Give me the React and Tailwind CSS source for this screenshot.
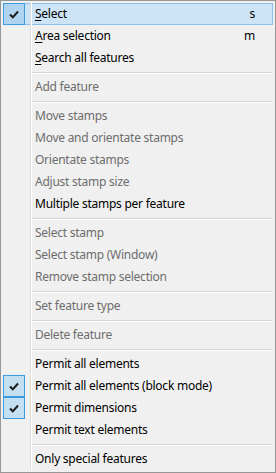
const groups = [
  [
    { label: "Select", mnemonic: true, shortcut: "s", checked: true, active: true },
    { label: "Area selection", mnemonic: true, shortcut: "m" },
    { label: "Search all features", mnemonic: true },
  ],
  [{ label: "Add feature", disabled: true }],
  [
    { label: "Move stamps", disabled: true },
    { label: "Move and orientate stamps", disabled: true },
    { label: "Orientate stamps", disabled: true },
    { label: "Adjust stamp size", disabled: true },
    { label: "Multiple stamps per feature" },
  ],
  [
    { label: "Select stamp", disabled: true },
    { label: "Select stamp (Window)", disabled: true },
    { label: "Remove stamp selection", disabled: true },
  ],
  [{ label: "Set feature type", disabled: true }],
  [{ label: "Delete feature", disabled: true }],
  [
    { label: "Permit all elements" },
    { label: "Permit all elements (block mode)", checked: true },
    { label: "Permit dimensions", checked: true },
    { label: "Permit text elements" },
  ],
  [{ label: "Only special features" }],
];

const Check = () => (
  <svg width="10" height="9" viewBox="0 0 10 9">
    <path d="M1 4.5 L3.8 7.3 L9 1.5" fill="none" stroke="#1a1a1a" strokeWidth="2" />
  </svg>
);

const MenuItem = ({ item }) => (
  <div
    className={`relative flex h-[22px] items-center border ${
      item.active ? "border-[#90c0ea] bg-[#cde4f7]" : "border-transparent"
    }`}
  >
    <div className="flex h-[22px] w-[27px] shrink-0 items-center -ml-px">
      {item.checked && (
        <div
          className={`flex h-[22px] w-[22px] items-center justify-center border border-[#3c9ade] ${
            item.active ? "bg-[#b0d4ef]" : "bg-[#c4dff1]"
          }`}
        >
          <Check />
        </div>
      )}
    </div>
    <div className="h-[22px] w-px shrink-0 bg-[#dcdcdc]" />
    <div className="h-[22px] w-px shrink-0 bg-white" />
    <div
      className={`flex flex-1 items-center justify-between pl-[3px] pr-[17px] text-[12px] tracking-[-0.25px] ${
        item.disabled ? "text-[#6d6d6d]" : "text-black"
      }`}
    >
      <span>
        {item.mnemonic ? (
          <>
            <span className="underline underline-offset-2">{item.label[0]}</span>
            {item.label.slice(1)}
          </>
        ) : (
          item.label
        )}
      </span>
      {item.shortcut && <span>{item.shortcut}</span>}
    </div>
  </div>
);

const Separator = () => (
  <div className="flex h-[7px]">
    <div className="w-[27px] shrink-0" />
    <div className="w-px shrink-0 bg-[#dcdcdc]" />
    <div className="w-px shrink-0 bg-white" />
    <div className="flex flex-1 flex-col pt-[3px] pr-px">
      <div className="h-px bg-[#d7d7d7]" />
      <div className="h-px bg-white" />
    </div>
  </div>
);

export default function App() {
  return (
    <div
      className="h-[473px] w-[276px] border border-[#979797] bg-[#f0f0f0] p-[2px] leading-none"
      style={{ fontFamily: '"Noto Sans", "Open Sans", sans-serif' }}
    >
      {groups.map((group, gi) => (
        <div key={gi}>
          {gi > 0 && <Separator />}
          {group.map((item) => (
            <MenuItem key={item.label} item={item} />
          ))}
        </div>
      ))}
    </div>
  );
}
